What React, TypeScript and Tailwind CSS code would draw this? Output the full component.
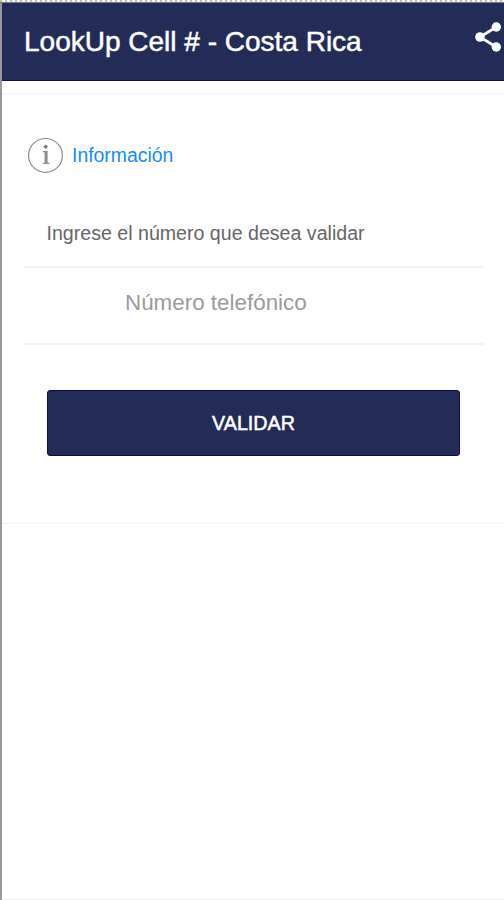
import React from 'react';

const ShareIcon = () => (
  <svg className="h-[30px] w-[30px] shrink-0" viewBox="0 0 30 30" fill="none" aria-hidden="true">
    <path d="M22.3 5 6 15l16.3 10" stroke="#fff" strokeWidth="2.8" />
    <circle cx="22.3" cy="5" r="4.7" fill="#fff" />
    <circle cx="6" cy="15" r="4.8" fill="#fff" />
    <circle cx="22.3" cy="25" r="4.7" fill="#fff" />
  </svg>
);

const InfoIcon = () => (
  <svg className="h-9 w-9 shrink-0" viewBox="0 0 36 36" fill="none" aria-hidden="true">
    <circle cx="18.5" cy="18.4" r="16.9" stroke="#8c8c8c" strokeWidth="1.2" />
    <path d="m18.7 7.4 2.3 2.3-2.3 2.3-2.3-2.3z" fill="#777" />
    <path d="M16 14h4.6v11.7h1.8v1.3H16v-1.3h1.6V15.3H16z" fill="#8c8c8c" />
  </svg>
);

const App = () => {
  return (
    <div className="flex h-[900px] w-[504px] flex-col overflow-hidden bg-white font-['Liberation_Sans',Arial,sans-serif]">
      <div className="h-[3px] shrink-0 border-b border-[#777b83] bg-[repeating-linear-gradient(90deg,#b9bdb7_0px,#b9bdb7_2px,#f4f5f2_2px,#f4f5f2_5px)]"></div>

      <div className="flex flex-1 flex-col border-l-2 border-[#999]">
        <header className="flex h-[78px] shrink-0 items-center justify-between border-b border-[#100e43] bg-[#232c56] pl-[22px]">
          <h1 className="pt-px text-[28px] leading-none text-white [-webkit-text-stroke:0.5px_#fff]">
            LookUp Cell # - Costa Rica
          </h1>
          <div className="-mt-[9px]">
            <ShareIcon />
          </div>
        </header>

        <main className="mt-3 flex h-[431px] shrink-0 flex-col border-y border-[#f2f2f2]">
          <div className="mt-[43px] flex h-9 items-center gap-[9px] pl-[25px]">
            <InfoIcon />
            <a href="#info" className="text-[19.4px] leading-6 text-[#158bfa]">
              Información
            </a>
          </div>

          <div className="mr-5 ml-[22px] mt-12 flex flex-col">
            <label htmlFor="phone" className="h-[47px] border-b-2 border-[#f4f4f4] pl-[22.5px] text-[19.6px] leading-6 text-[#666]">
              Ingrese el número que desea validar
            </label>
            <input
              id="phone"
              type="tel"
              placeholder="Número telefónico"
              className="h-[77px] border-b-2 border-[#f4f4f4] pb-1.5 pl-[101px] text-[22.4px] text-[#555] outline-none placeholder:text-[#9b9b9b]"
            />
          </div>

          <button className="mr-11 ml-[45px] mt-[45px] h-[66px] rounded-[3px] border border-[#0f0d47] bg-[#232c56] pt-0.5 text-[19.7px] text-white [-webkit-text-stroke:0.5px_#fff]">
            VALIDAR
          </button>
        </main>

        <div className="mt-auto h-px bg-[#f0f0f0]"></div>
      </div>
    </div>
  );
};

export default App;
